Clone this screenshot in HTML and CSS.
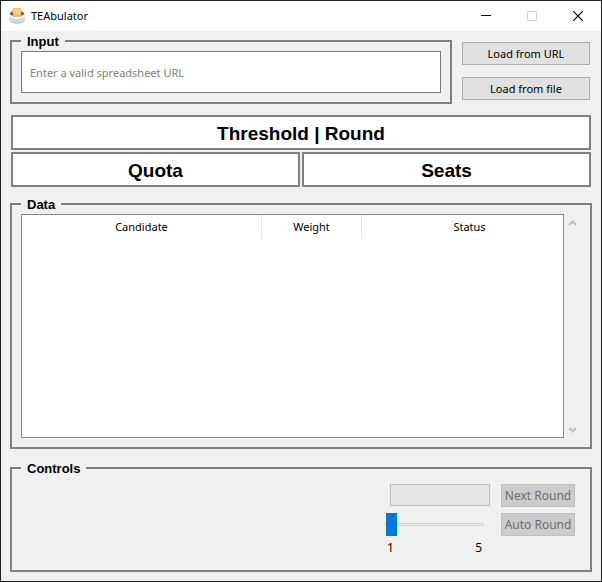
FILE: index.html
```html
<!DOCTYPE html>
<html lang="en">
<head>
<meta charset="utf-8">
<title>TEAbulator</title>
<link rel="stylesheet" href="styles.css">
</head>
<body>
<div class="window">
  <header class="titlebar">
    <svg class="logo" viewBox="0 0 16 16" aria-hidden="true">
      <ellipse cx="8" cy="11" rx="8" ry="4.500" fill="#9db3c3"/>
      <ellipse cx="8" cy="10" rx="8" ry="4.500" fill="#dce6ed"/>
      <path d="M1 5h14c0 5-2.500 8-7 8S1 10 1 5z" fill="#eef4f8"/>
      <path d="M2.500 10.500q5.500 4 11 0" fill="none" stroke="#a9bccb"/>
      <ellipse cx="8" cy="5.500" rx="7" ry="3" fill="#8b4a32"/>
      <path d="M3.500 1.500Q3.500 0 5 0h6q1.500 0 1.500 1.500L12 8q0 1-1 1H5Q4 9 4 8z" fill="#f3bd62"/>
      <path d="M5 1h6v5H5z" fill="#ffd486"/>
    </svg>
    <h1 class="title">TEAbulator</h1>
    <div class="window-buttons">
      <button type="button" class="window-button" aria-label="Minimize">
        <svg viewBox="0 0 10 10"><path d="M0 4.500h10" stroke="#000"/></svg>
      </button>
      <button type="button" class="window-button" aria-label="Maximize" disabled>
        <svg viewBox="0 0 10 10"><path d="M.5.5h9v9h-9z" fill="none" stroke="#ccc"/></svg>
      </button>
      <button type="button" class="window-button" aria-label="Close">
        <svg viewBox="0 0 10 10"><path d="M0 0l10 10M10 0L0 10" stroke="#000" stroke-width="1.200"/></svg>
      </button>
    </div>
  </header>
  <main class="content">
    <section class="source">
      <fieldset class="group source-group">
        <legend>Input</legend>
        <input class="url" type="text" aria-label="Spreadsheet URL" placeholder="Enter a valid spreadsheet URL">
      </fieldset>
      <div class="source-buttons">
        <button type="button" class="button">Load from URL</button>
        <button type="button" class="button">Load from file</button>
      </div>
    </section>
    <section class="stats">
      <div class="stat stat-wide">Threshold | Round</div>
      <div class="stat">Quota</div>
      <div class="stat">Seats</div>
    </section>
    <fieldset class="group data-group">
      <legend>Data</legend>
      <div class="data">
        <div class="table-box">
          <table class="table">
            <thead>
              <tr>
                <th class="col-candidate">Candidate</th>
                <th class="col-weight">Weight</th>
                <th class="col-status">Status</th>
              </tr>
            </thead>
            <tbody></tbody>
          </table>
        </div>
        <div class="scrollbar" aria-hidden="true">
          <svg viewBox="0 0 9 6"><path d="M1 5l3.500-3.500L8 5" fill="none" stroke="#bfbfbf" stroke-width="2"/></svg>
          <svg viewBox="0 0 9 6"><path d="M1 1l3.500 3.500L8 1" fill="none" stroke="#bfbfbf" stroke-width="2"/></svg>
        </div>
      </div>
    </fieldset>
    <fieldset class="group controls-group">
      <legend>Controls</legend>
      <div class="controls">
        <progress class="progress" value="0" max="100" aria-label="Progress"></progress>
        <button type="button" class="button" disabled>Next Round</button>
        <input class="slider" type="range" min="1" max="5" value="1" aria-label="Speed">
        <button type="button" class="button" disabled>Auto Round</button>
        <div class="scale"><span>1</span><span>5</span></div>
      </div>
    </fieldset>
  </main>
</div>
</body>
</html>
```
FILE: styles.css
```css
* {
  box-sizing: border-box;
}

body {
  margin: 0;
  font: 11px/16px "Noto Sans", "Open Sans", sans-serif;
  color: #000;
}

button,
input {
  font: inherit;
  color: inherit;
}

.window {
  display: flex;
  flex-direction: column;
  min-height: 100vh;
  border: 1px solid #222;
  background: #f0f0f0;
}

.titlebar {
  display: flex;
  align-items: center;
  height: 30px;
  padding-left: 8px;
  background: #fff;
}

.logo {
  width: 16px;
  height: 16px;
  margin-right: 6px;
}

.title {
  margin: 0;
  font-size: 11px;
  font-weight: 400;
}

.window-buttons {
  display: flex;
  align-self: stretch;
  margin-left: auto;
}

.window-button {
  display: flex;
  align-items: center;
  justify-content: center;
  width: 46px;
  padding: 0;
  border: 0;
  background: none;
}

.window-button svg {
  width: 10px;
  height: 10px;
}

.content {
  padding: 2px 9px 9px;
}

.group {
  min-width: 0;
  margin: 0;
  padding: 2px 9px 9px;
  border: 2px solid #808080;
}

.group legend {
  padding: 2px 6px 0;
  font: bold 13px/14px "Liberation Sans", Arial, sans-serif;
}

.source {
  display: flex;
  gap: 10px;
}

.source-group {
  flex: 1;
}

.url {
  display: block;
  width: 100%;
  height: 42px;
  padding: 0 8px;
  border: 1px solid #7a7a7a;
  background: #fff;
}

.url::placeholder {
  color: #808080;
}

.source-buttons {
  display: flex;
  flex-direction: column;
  gap: 12px;
  width: 130px;
  padding: 9px 2px 0 0;
}

.button {
  height: 23px;
  padding: 0;
  border: 1px solid #adadad;
  background: #e1e1e1;
}

.button:disabled {
  border-color: #bfbfbf;
  background: #ccc;
  color: #6d6d6d;
  font-size: 12px;
}

.stats {
  display: grid;
  grid-template-columns: 1fr 1fr;
  gap: 2px;
  margin: 11px 1px 9px;
}

.stat {
  height: 35px;
  border: 2px solid #808080;
  background: #fff;
  font: bold 19px/33px "Liberation Sans", Arial, sans-serif;
  text-align: center;
}

.stat-wide {
  grid-column: 1 / -1;
}

.data-group {
  padding-right: 8px;
}

.data {
  display: flex;
  min-height: 224px;
}

.table-box {
  flex: 1;
  border: 1px solid #828790;
  background: #fff;
}

.table {
  width: 100%;
  border-spacing: 0;
  table-layout: fixed;
}

.table th {
  height: 24px;
  padding: 0;
  border-right: 1px solid #e5e5e5;
  font-weight: 400;
}

.table .col-candidate {
  width: 240px;
}

.table .col-weight {
  width: 100px;
}

.table .col-status {
  padding-left: 14px;
  border-right: 0;
}

.scrollbar {
  display: flex;
  flex-direction: column;
  justify-content: space-between;
  align-items: center;
  width: 16px;
  margin-right: 2px;
  padding: 6px 0 5px;
}

.scrollbar svg {
  width: 9px;
  height: 6px;
}

.controls-group {
  margin-top: 11px;
  padding: 8px 15px 14px 9px;
}

.controls {
  display: grid;
  grid-template-columns: 105px 74px;
  gap: 6px 11px;
  justify-content: end;
}

.progress {
  justify-self: end;
  width: 100px;
  height: 22px;
  border: 1px solid #bcbcbc;
  background: #e6e6e6;
  appearance: none;
}

.progress::-webkit-progress-bar {
  background: #e6e6e6;
}

.slider {
  width: 99px;
  height: 23px;
  margin: 0;
  background: none;
  appearance: none;
}

.slider::-webkit-slider-runnable-track {
  height: 3px;
  border: 1px solid #d6d6d6;
  background: #e7eaea;
}

.slider::-webkit-slider-thumb {
  width: 11px;
  height: 23px;
  margin-top: -11px;
  background: #0078d7;
  appearance: none;
}

.scale {
  display: flex;
  justify-content: space-between;
  width: 99px;
  margin-top: -2px;
  padding: 0 2px;
  font-size: 12px;
}
```
